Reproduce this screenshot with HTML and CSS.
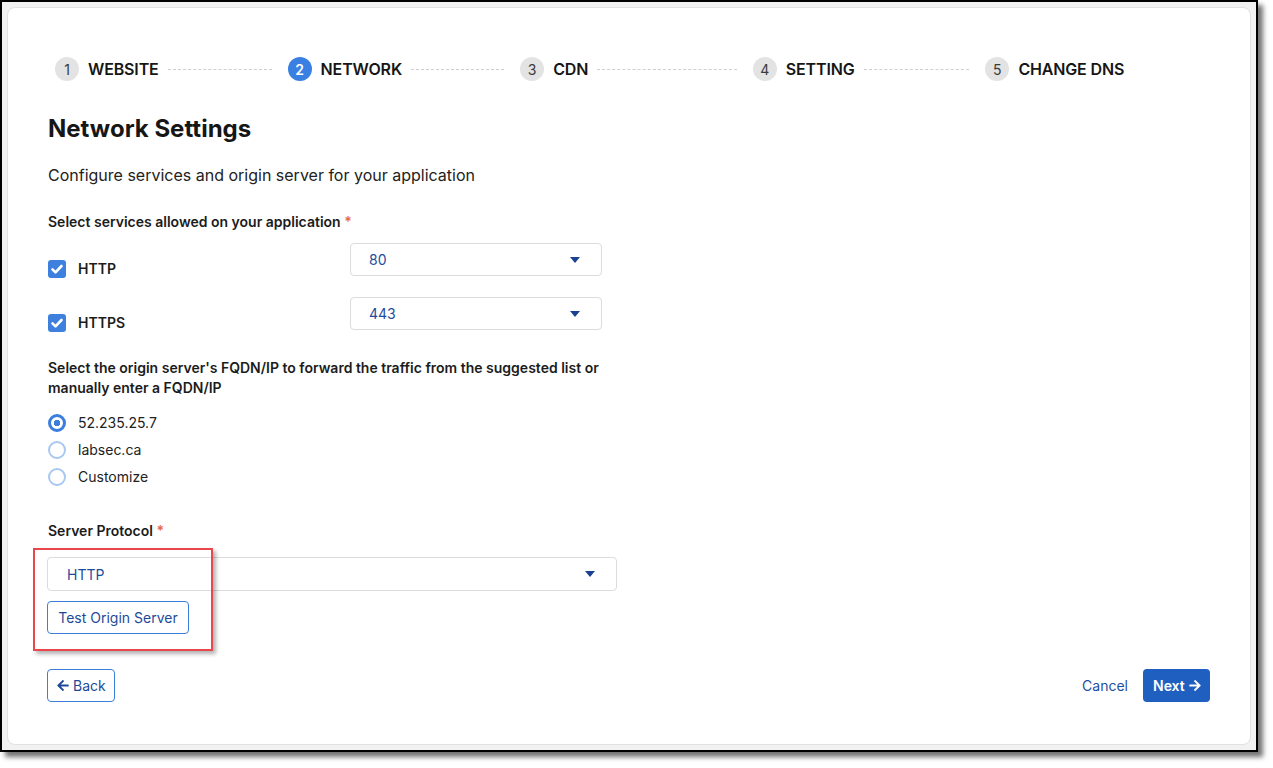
FILE: index.html
```html
<!DOCTYPE html>
<html lang="en">
<head>
<meta charset="utf-8">
<title>Network Settings</title>
<link rel="stylesheet" href="styles.css">
</head>
<body>
<div class="frame">
  <div class="card">
    <div class="stepper">
      <div class="step"><span class="num">1</span><span class="step-label">WEBSITE</span><span class="line"></span></div>
      <div class="step"><span class="num active">2</span><span class="step-label">NETWORK</span><span class="line"></span></div>
      <div class="step"><span class="num">3</span><span class="step-label">CDN</span><span class="line"></span></div>
      <div class="step"><span class="num">4</span><span class="step-label">SETTING</span><span class="line"></span></div>
      <div class="step"><span class="num">5</span><span class="step-label">CHANGE DNS</span></div>
    </div>

    <h1 class="title">Network Settings</h1>
    <p class="subtitle">Configure services and origin server for your application</p>

    <div class="form">
      <div class="field-label">Select services allowed on your application <span class="req">*</span></div>
      <div class="service-rows">
        <div class="service-row">
          <label class="check">
            <span class="box"><svg viewBox="0 0 18 18" width="18" height="18"><path d="M4.5 9.3l3 3 6-6.3" fill="none" stroke="#fff" stroke-width="2.6" stroke-linecap="round" stroke-linejoin="round"/></svg></span>
            <span class="check-text">HTTP</span>
          </label>
          <div class="select small"><span class="select-value">80</span><svg class="caret" viewBox="0 0 10 6" width="10" height="6"><path d="M0 0h10L5 6z"/></svg></div>
        </div>
        <div class="service-row">
          <label class="check">
            <span class="box"><svg viewBox="0 0 18 18" width="18" height="18"><path d="M4.5 9.3l3 3 6-6.3" fill="none" stroke="#fff" stroke-width="2.6" stroke-linecap="round" stroke-linejoin="round"/></svg></span>
            <span class="check-text">HTTPS</span>
          </label>
          <div class="select small"><span class="select-value">443</span><svg class="caret" viewBox="0 0 10 6" width="10" height="6"><path d="M0 0h10L5 6z"/></svg></div>
        </div>
      </div>

      <div class="field-label origin">Select the origin server's FQDN/IP to forward the traffic from the suggested list or manually enter a FQDN/IP</div>
      <div class="radios">
        <label class="radio"><span class="dot checked"></span><span>52.235.25.7</span></label>
        <label class="radio"><span class="dot"></span><span>labsec.ca</span></label>
        <label class="radio"><span class="dot"></span><span>Customize</span></label>
      </div>

      <div class="field-label protocol">Server Protocol <span class="req">*</span></div>
      <div class="protocol-block">
        <div class="select wide"><span class="select-value">HTTP</span><svg class="caret" viewBox="0 0 10 6" width="10" height="6"><path d="M0 0h10L5 6z"/></svg></div>
        <button class="btn-outline test">Test Origin Server</button>
        <div class="highlight"></div>
      </div>
    </div>

    <div class="footer">
      <button class="btn-outline back"><svg viewBox="0 0 448 512" width="12" height="13"><path d="M257.5 445.1l-22.2 22.2c-9.4 9.4-24.6 9.4-33.9 0L7 273c-9.4-9.4-9.4-24.6 0-33.9L201.4 44.7c9.4-9.4 24.6-9.4 33.9 0l22.2 22.2c9.5 9.5 9.3 25-.4 34.3L136.6 216H424c13.3 0 24 10.7 24 24v32c0 13.3-10.7 24-24 24H136.6l120.5 114.8c9.8 9.3 10 24.8.4 34.3z"/></svg>Back</button>
      <div class="footer-right">
        <button class="btn-link">Cancel</button>
        <button class="btn-primary">Next<svg viewBox="0 0 448 512" width="12" height="13"><path d="M190.5 66.9l22.2-22.2c9.4-9.4 24.6-9.4 33.9 0L441 239c9.4 9.4 9.4 24.6 0 33.9L246.6 467.3c-9.4 9.4-24.6 9.4-33.9 0l-22.2-22.2c-9.5-9.5-9.3-25 .4-34.3L311.4 296H24c-13.3 0-24-10.7-24-24v-32c0-13.3 10.7-24 24-24h287.4L190.9 101.2c-9.8-9.3-10-24.8-.4-34.3z"/></svg></button>
      </div>
    </div>
  </div>
</div>
</body>
</html>
```

FILE: styles.css
```css
* { box-sizing: border-box; }
html, body { margin: 0; padding: 0; background: #fff; }
body {
  font-family: Inter, "Noto Sans", "Liberation Sans", sans-serif;
  color: #1c1c1c;
  width: 1273px;
  height: 768px;
  overflow: hidden;
}
.frame {
  width: 1258px;
  height: 752px;
  border: 2px solid #000;
  background: #f2f2f2;
  padding: 5px;
  box-shadow: 5px 5px 5px rgba(0, 0, 0, 0.55);
}
.card {
  height: 100%;
  background: #fff;
  border: 1px solid #e1e1e1;
  border-radius: 8px;
  padding: 49px 40px 0 39px;
  display: flex;
  flex-direction: column;
}

/* Stepper */
.stepper { display: flex; height: 24px; }
.step {
  flex: 1 1 0;
  display: flex;
  align-items: center;
  padding-left: 8px;
  min-width: 0;
}
.num {
  width: 24px; height: 24px;
  border-radius: 50%;
  background: #e3e3e3;
  color: #3a3a3a;
  font-size: 14px;
  display: flex; align-items: center; justify-content: center;
  flex: none;
  margin-right: 9px;
}
.num.active { background: #3a80e2; color: #fff; font-weight: 600; }
.step-label { font-size: 16px; font-weight: 600; color: #161616; white-space: nowrap; letter-spacing: -0.15px; }
.line {
  flex: 1;
  border-top: 1px dashed #cfcfcf;
  margin: 0 8px 0 9px;
}

.title {
  margin: 32px 0 0 1px;
  font-size: 24px;
  line-height: 32px;
  font-weight: 700;
  color: #161616;
}
.subtitle {
  margin: 18px 0 0 1px;
  font-size: 16px;
  line-height: 24px;
  color: #222;
}

.form { width: 570px; display: flex; flex-direction: column; }
.field-label {
  margin: 25px 0 0 1px;
  font-size: 14px;
  line-height: 20px;
  font-weight: 600;
  color: #1c1c1c;
}
.req { color: #e8693c; font-weight: 600; }

.service-rows { display: flex; flex-direction: column; gap: 19px; margin-top: 11px; }
.service-row { display: flex; align-items: flex-start; height: 35px; }
.check { display: flex; align-items: center; width: 303px; margin-top: 17px; padding-left: 1px; }
.box {
  width: 18px; height: 18px;
  border-radius: 3px;
  background: #3d80de;
  display: block;
  flex: none;
}
.box svg { display: block; }
.check-text { margin-left: 12px; font-size: 14px; font-weight: 600; color: #1c1c1c; line-height: 18px; }

.select {
  height: 33px;
  border: 1px solid #dcdcdc;
  border-radius: 4px;
  display: flex;
  align-items: center;
  justify-content: space-between;
  background: #fff;
}
.select.small { width: 252px; padding: 0 21px 0 18px; }
.select.wide { width: 570px; height: 34px; padding: 0 21px 0 19px; }
.select-value { font-size: 14px; color: #1d4c9c; }
.caret { fill: #1a4192; display: block; }

.field-label.origin { margin-top: 26px; }

.radios { display: flex; flex-direction: column; margin-top: 11px; }
.radio { display: flex; align-items: center; height: 27px; font-size: 14px; color: #222; padding-left: 1px; }
.dot {
  width: 18px; height: 18px;
  border-radius: 50%;
  border: 2px solid #a9c8f1;
  margin-right: 12px;
  flex: none;
  background: #fff;
}
.dot.checked {
  border: 3px solid #3a7edf;
  background: radial-gradient(circle, #3a7edf 0 3px, #fff 3.5px);
}

.field-label.protocol { margin-top: 31px; }

.protocol-block { position: relative; margin-top: 16px; display: flex; flex-direction: column; align-items: flex-start; }
.highlight {
  position: absolute;
  left: -14px;
  top: -9px;
  width: 180px;
  height: 103px;
  border: 2px solid #e9474b;
  box-shadow: 3px 3px 4px rgba(0, 0, 0, 0.3);
  pointer-events: none;
}

button { font-family: inherit; cursor: pointer; }
.btn-outline {
  height: 33px;
  border: 1px solid #3b7fdc;
  border-radius: 4px;
  background: #fff;
  color: #1d4a98;
  font-size: 14px;
  padding: 0 9px;
  display: inline-flex;
  align-items: center;
}
.test { margin-top: 10px; width: 142px; justify-content: center; padding: 0; }

.footer {
  margin-top: 35px;
  display: flex;
  justify-content: space-between;
  align-items: center;
}
.back { width: 68px; padding: 0 0 0 9px; gap: 4px; }
.back svg { fill: #1d4a98; display: block; }
.footer-right { display: flex; align-items: center; gap: 15px; }
.btn-link {
  border: none; background: none; padding: 0;
  font-size: 14px; color: #1d4fa1;
}
.btn-primary {
  height: 33px;
  width: 67px;
  border: none;
  border-radius: 4px;
  background: #1f5fc0;
  color: #fff;
  font-size: 14px;
  font-weight: 600;
  display: inline-flex;
  align-items: center;
  padding: 0 0 0 10px;
  gap: 4px;
}
.btn-primary svg { fill: #fff; display: block; }
```
